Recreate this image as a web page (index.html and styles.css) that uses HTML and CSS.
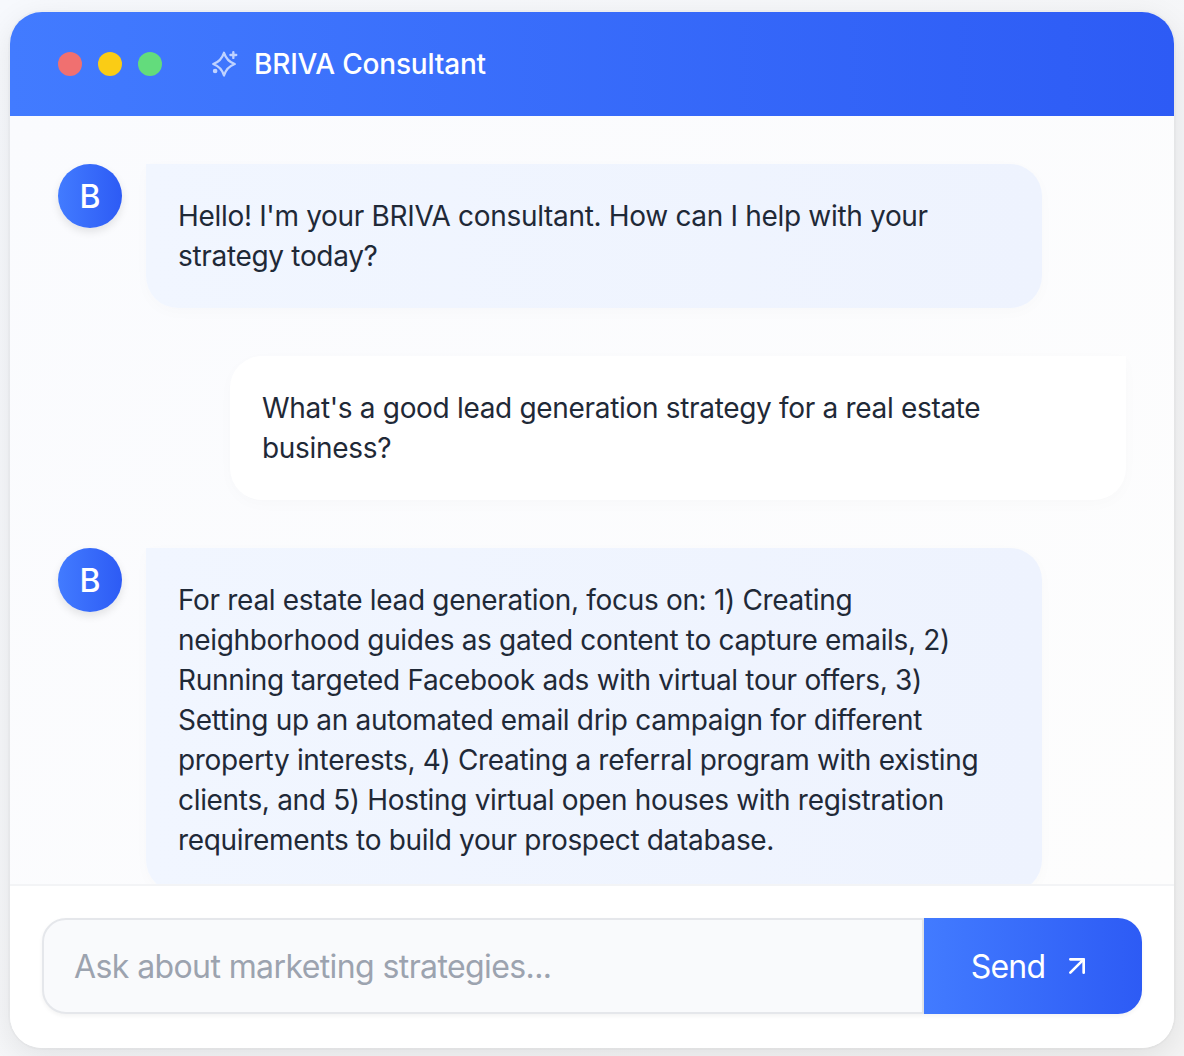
FILE: index.html
```html
<!DOCTYPE html>
<html lang="en">
<head>
    <meta charset="UTF-8">
    <meta name="viewport" content="width=device-width, initial-scale=1.0">
    <title>BRIVA Consultant</title>
    <link rel="stylesheet" href="styles.css">
</head>
<body>
    <div class="chat-window">
        <header class="chat-header">
            <div class="dots">
                <span class="dot dot-red"></span>
                <span class="dot dot-yellow"></span>
                <span class="dot dot-green"></span>
            </div>
            <svg class="header-icon" viewBox="0 0 24 24" fill="none" stroke="currentColor" stroke-width="2" stroke-linecap="round" stroke-linejoin="round">
                <path d="M12 2.4Q14.4 9.6 21.2 12Q14.4 14.4 12 21.8Q9.6 14.4 2.8 12Q9.6 9.6 12 2.4Z"/>
                <path d="M20 1.8v5"/>
                <path d="M22.5 4.3h-5"/>
                <circle cx="4.4" cy="18" r="1" fill="currentColor"/>
            </svg>
            <h1>BRIVA Consultant</h1>
        </header>

        <div class="messages">
            <div class="message">
                <div class="avatar">B</div>
                <div class="bubble bubble-bot">Hello! I'm your BRIVA consultant. How can I help with your strategy today?</div>
            </div>
            <div class="message message-user">
                <div class="bubble bubble-user">What's a good lead generation strategy for a real estate business?</div>
            </div>
            <div class="message">
                <div class="avatar">B</div>
                <div class="bubble bubble-bot">For real estate lead generation, focus on: 1) Creating neighborhood guides as gated content to capture emails, 2) Running targeted Facebook ads with virtual tour offers, 3) Setting up an automated email drip campaign for different property interests, 4) Creating a referral program with existing clients, and 5) Hosting virtual open houses with registration requirements to build your prospect database.</div>
            </div>
        </div>

        <form class="composer">
            <input class="composer-input" type="text" placeholder="Ask about marketing strategies...">
            <button class="send-button" type="button">
                Send
                <svg class="send-icon" viewBox="0 0 24 24" fill="none" stroke="currentColor" stroke-width="2" stroke-linecap="round" stroke-linejoin="round">
                    <path d="M7 7h10v10"/>
                    <path d="M7 17 17 7"/>
                </svg>
            </button>
        </form>
    </div>
</body>
</html>
```

FILE: styles.css
```css
* {
    box-sizing: border-box;
}
body {
    font-family: Inter, "Liberation Sans", sans-serif;
    margin: 0;
    padding: 12px 10px 8px;
    height: 1056px;
    overflow: hidden;
    background: linear-gradient(135deg, #f7f9fd, #f4f4f4);
}
.chat-window {
    display: flex;
    flex-direction: column;
    height: 1036px;
    overflow: hidden;
    border-radius: 32px;
    background-color: #fff;
    box-shadow: 0 8px 32px rgba(0, 0, 0, 0.09), 0 0 0 2px rgba(0, 0, 0, 0.02);
}
.chat-header {
    display: flex;
    align-items: center;
    flex-shrink: 0;
    height: 104px;
    padding: 0 48px;
    color: #fff;
    background: linear-gradient(90deg, #427bff, #2d5bf5);
}
.dots {
    display: flex;
    gap: 16px;
    margin-right: 48px;
}
.dot {
    width: 24px;
    height: 24px;
    border-radius: 50%;
}
.dot-red {
    background-color: #f07070;
}
.dot-yellow {
    background-color: #facc15;
}
.dot-green {
    background-color: #63dc7c;
}
.header-icon {
    width: 28px;
    height: 28px;
    margin-right: 16px;
    color: #bfd2ff;
}
.chat-header h1 {
    margin: 0;
    font-size: 28px;
    font-weight: 500;
    line-height: 40px;
    letter-spacing: -0.19px;
}
.messages {
    flex: 1;
    min-height: 0;
    overflow: hidden;
    padding: 48px;
    background: linear-gradient(135deg, #fafbfe, #fdfdfd);
}
.message {
    display: flex;
    gap: 24px;
    margin-bottom: 48px;
}
.message-user {
    justify-content: flex-end;
}
.avatar {
    display: flex;
    align-items: center;
    justify-content: center;
    flex-shrink: 0;
    width: 64px;
    height: 64px;
    border-radius: 50%;
    color: #fff;
    font-size: 32px;
    font-weight: 500;
    background: linear-gradient(90deg, #427bff, #2d5bf5);
    box-shadow: 0 4px 8px rgba(0, 0, 0, 0.1);
}
.bubble {
    width: 896px;
    padding: 32px;
    font-size: 28px;
    line-height: 40px;
    letter-spacing: -0.32px;
    color: #1f2937;
    box-shadow: 0 4px 16px rgba(0, 0, 0, 0.02);
}
.bubble-bot {
    border-radius: 0 32px 32px 32px;
    background: linear-gradient(90deg, #f1f6ff, #eef3fe);
}
.bubble-user {
    border-radius: 32px 0 32px 32px;
    background-color: #fff;
}
.composer {
    display: flex;
    flex-shrink: 0;
    margin: 0;
    padding: 32px 32px 34px;
    border-top: 2px solid #f3f4f6;
    background-color: #fff;
}
.composer-input {
    flex: 1;
    height: 96px;
    padding: 0 30px;
    border: 2px solid #e5e7eb;
    border-radius: 24px 0 0 24px;
    outline: none;
    font-family: inherit;
    font-size: 32px;
    letter-spacing: -0.6px;
    color: #1f2937;
    background-color: #f9fafc;
    box-shadow: 0 2px 4px rgba(0, 0, 0, 0.05);
}
.composer-input::placeholder {
    color: #9ca3af;
}
.send-button {
    display: flex;
    align-items: center;
    justify-content: center;
    gap: 16px;
    width: 218px;
    height: 96px;
    padding: 0 2px 0 0;
    border: none;
    border-radius: 0 24px 24px 0;
    font-family: inherit;
    font-size: 32px;
    letter-spacing: -0.8px;
    color: #fff;
    background: linear-gradient(90deg, #427bff, #2d5bf5);
    box-shadow: 0 2px 4px rgba(0, 0, 0, 0.05);
    cursor: pointer;
}
.send-icon {
    width: 32px;
    height: 32px;
}
```
